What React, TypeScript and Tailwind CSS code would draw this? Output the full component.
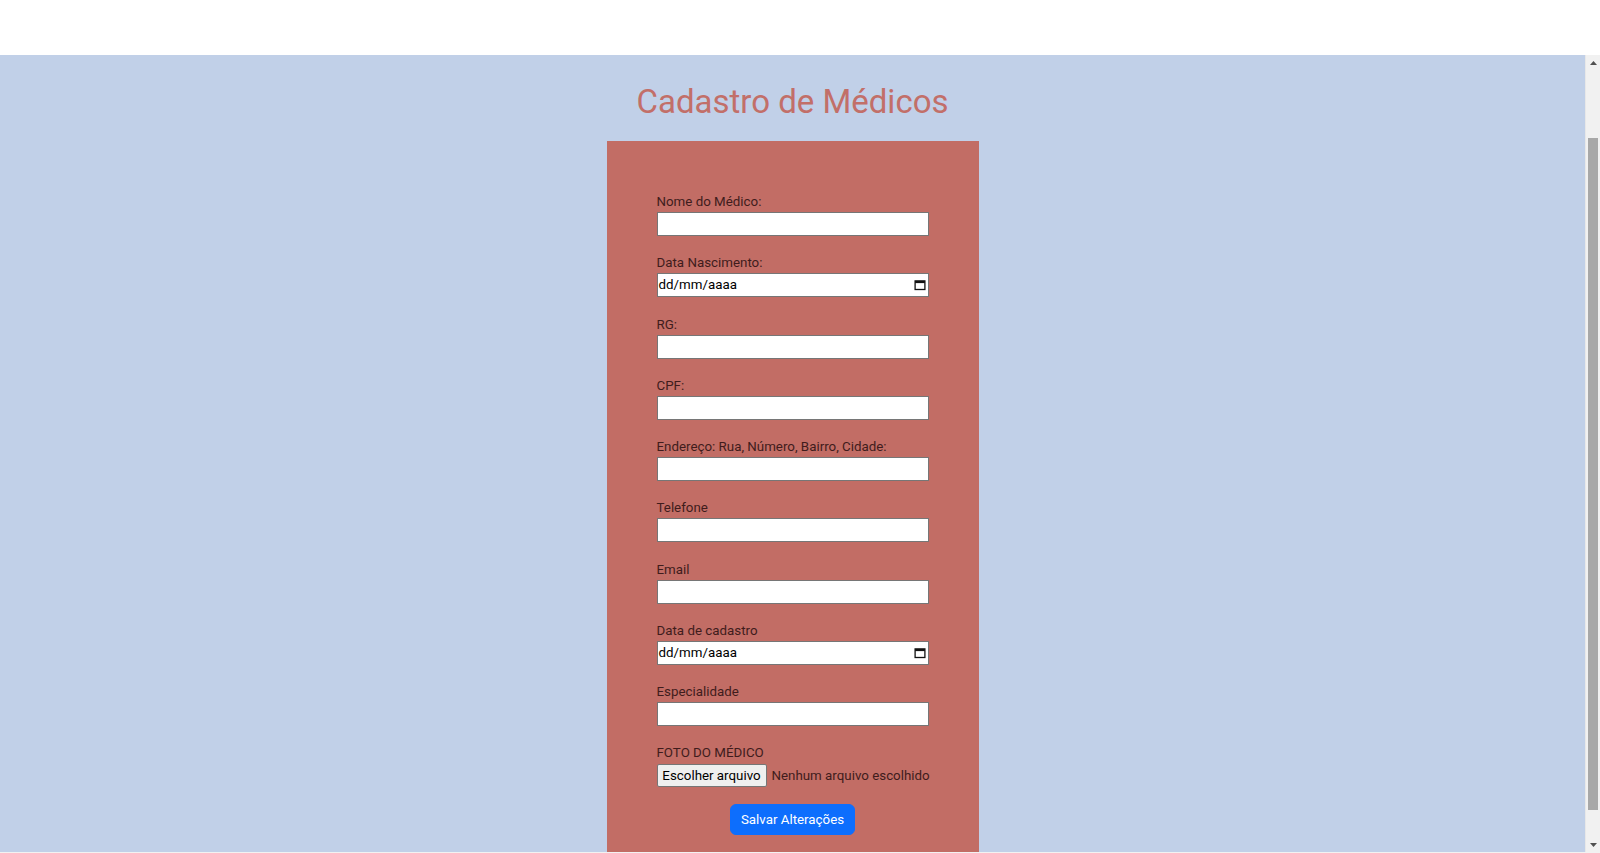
import { useLayoutEffect, useRef } from "react";

const fields: { label: string; type: "text" | "date" }[] = [
  { label: "Nome do Médico:", type: "text" },
  { label: "Data Nascimento:", type: "date" },
  { label: "RG:", type: "text" },
  { label: "CPF:", type: "text" },
  { label: "Endereço: Rua, Número, Bairro, Cidade:", type: "text" },
  { label: "Telefone", type: "text" },
  { label: "Email", type: "text" },
  { label: "Data de cadastro", type: "date" },
  { label: "Especialidade", type: "text" },
];

function CalendarIcon() {
  return (
    <svg width="12" height="12" viewBox="0 0 12 12" className="shrink-0">
      <rect x="1.1" y="1.9" width="9.8" height="8.6" fill="none" stroke="#111" strokeWidth="1.3" />
      <rect x="1.1" y="1.9" width="9.8" height="2.2" fill="#111" />
    </svg>
  );
}

function DateField() {
  return (
    <div className="flex h-[24px] w-[272px] items-center justify-between border border-[#767676] bg-white pl-[1px] pr-[2px] text-[13.33px] text-black">
      <span>dd/mm/aaaa</span>
      <CalendarIcon />
    </div>
  );
}

function Arrow({ down }: { down?: boolean }) {
  return (
    <div className="flex h-[15px] items-center justify-center">
      <svg width="7" height="4" viewBox="0 0 7 4">
        <path d={down ? "M0 0h7L3.5 4z" : "M3.5 0L7 4H0z"} fill="#505050" />
      </svg>
    </div>
  );
}

// browser scrollbar of the scrolling pane, as drawn in the capture
function Scrollbar() {
  return (
    <div className="flex w-[15px] shrink-0 flex-col border-l border-[#e8e8e8] bg-[#f1f1f1]">
      <Arrow />
      <div className="flex-1">
        <div className="mx-[2px] mt-[68px] h-[672px] bg-[#a8a8a8]" />
      </div>
      <Arrow down />
    </div>
  );
}

export default function App() {
  const scrollRef = useRef<HTMLDivElement>(null);

  // the page in the capture is scrolled a little
  useLayoutEffect(() => {
    if (scrollRef.current) scrollRef.current.scrollTop = 81;
  }, []);

  return (
    <div className="flex h-[853px] flex-col font-['Roboto','Liberation_Sans',sans-serif]">
      <div className="h-[55px] shrink-0 bg-white" />

      <div className="flex h-[797px] shrink-0">
        <div ref={scrollRef} className="flex-1 overflow-hidden bg-[#c1d0e8]">
          <div className="flex flex-col items-center pt-[108px]">
            <h1 className="text-[33px] leading-[40px] text-[#c26f69]">Cadastro de Médicos</h1>

            <form className="mt-[19px] w-[372px] bg-[#c26d65] px-[50px] pt-[53px] pb-[50px]">
              {fields.map((f, i) => (
                <div key={f.label} className={i === fields.length - 1 ? "mb-[19px]" : "mb-[19.25px]"}>
                  <label className="mb-[2px] block text-[13.33px] leading-[16px] text-[#3f1c1c]">{f.label}</label>
                  {f.type === "date" ? (
                    <DateField />
                  ) : (
                    <input
                      type="text"
                      className="block h-[24px] w-[272px] border border-[#767676] bg-white px-[2px] text-[13.33px] outline-none"
                    />
                  )}
                </div>
              ))}

              <label className="block text-[13.33px] leading-[16px] text-[#3f1c1c]">FOTO DO MÉDICO</label>
              <div className="mt-[3px] flex items-center gap-[5px] whitespace-nowrap">
                <button
                  type="button"
                  className="h-[23px] w-[110px] shrink-0 rounded-[2px] border border-[#767676] bg-[#efefef] text-[13.33px] text-black"
                >
                  Escolher arquivo
                </button>
                <span className="text-[13.33px] text-[#3f1c1c]">Nenhum arquivo escolhido</span>
              </div>

              <div className="mt-[17px] flex justify-center">
                <button
                  type="button"
                  className="h-[31px] rounded-[6px] border border-[#0d6efd] bg-[#0d6efd] px-[10px] text-[13.33px] text-white"
                >
                  Salvar Alterações
                </button>
              </div>
            </form>
          </div>
        </div>
        <Scrollbar />
      </div>

      <div className="h-px shrink-0 bg-[#f2f2f2]" />
    </div>
  );
}
